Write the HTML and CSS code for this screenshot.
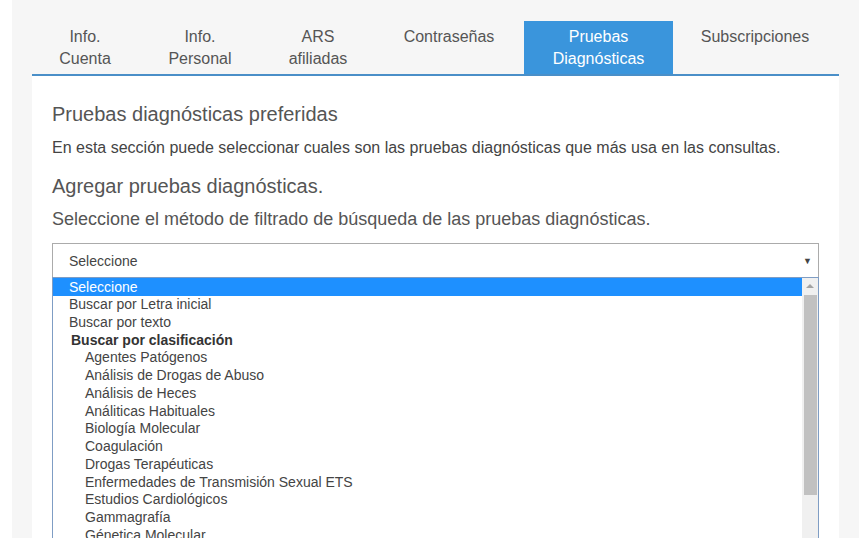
FILE: index.html
```html
<!DOCTYPE html>
<html lang="es">
<head>
<meta charset="utf-8">
<title>Pruebas diagnósticas</title>
<link rel="stylesheet" href="styles.css">
</head>
<body>
<div class="page">
  <nav class="tabs">
    <div class="tab tab-1">Info.<br>Cuenta</div>
    <div class="tab tab-2">Info.<br>Personal</div>
    <div class="tab tab-3">ARS<br>afiliadas</div>
    <div class="tab tab-4">Contraseñas</div>
    <div class="tab tab-5 active">Pruebas<br>Diagnósticas</div>
    <div class="tab tab-6">Subscripciones</div>
  </nav>
  <section class="panel">
    <h2 class="title">Pruebas diagnósticas preferidas</h2>
    <p class="desc">En esta sección puede seleccionar cuales son las pruebas diagnósticas que más usa en las consultas.</p>
    <h3 class="subtitle">Agregar pruebas diagnósticas.</h3>
    <p class="label">Seleccione el método de filtrado de búsqueda de las pruebas diagnósticas.</p>
    <div class="select">
      <span class="select-value">Seleccione</span>
      <span class="select-arrow">▼</span>
    </div>
    <div class="listbox">
      <div class="options">
        <div class="opt selected">Seleccione</div>
        <div class="opt">Buscar por Letra inicial</div>
        <div class="opt">Buscar por texto</div>
        <div class="opt group">Buscar por clasificación</div>
        <div class="opt child">Agentes Patógenos</div>
        <div class="opt child">Análisis de Drogas de Abuso</div>
        <div class="opt child">Análisis de Heces</div>
        <div class="opt child">Análiticas Habituales</div>
        <div class="opt child">Biología Molecular</div>
        <div class="opt child">Coagulación</div>
        <div class="opt child">Drogas Terapéuticas</div>
        <div class="opt child">Enfermedades de Transmisión Sexual ETS</div>
        <div class="opt child">Estudios Cardiológicos</div>
        <div class="opt child">Gammagrafía</div>
        <div class="opt child">Génetica Molecular</div>
      </div>
      <div class="scrollbar">
        <div class="scroll-up"></div>
        <div class="scroll-thumb"></div>
      </div>
    </div>
  </section>
</div>
</body>
</html>
```
FILE: styles.css
```css
html, body {
  margin: 0;
  padding: 0;
  background: #ffffff;
  overflow: hidden;
}
body {
  font-family: "Liberation Sans", Arial, sans-serif;
  color: #555;
}
.page {
  margin-left: 12px;
  width: 847px;
  height: 538px;
  box-sizing: border-box;
  background: #f6f6f6;
  padding: 21px 20px 0 20px;
  overflow: hidden;
}
.tabs {
  display: flex;
  height: 53px;
  border-bottom: 2px solid #4a8fc8;
}
.tab {
  box-sizing: border-box;
  text-align: center;
  font-size: 16px;
  line-height: 22px;
  padding-top: 5px;
  color: #555;
}
.tab-1 { width: 106px; }
.tab-2 { width: 124px; }
.tab-3 { width: 112px; }
.tab-4 { width: 150px; }
.tab-5 { width: 149px; }
.tab-6 { width: 164px; }
.tab.active {
  background: #3a95dc;
  color: #fff;
}
.panel {
  background: #fff;
  padding: 27px 20px 0 20px;
  height: 470px;
}
.title {
  margin: 0;
  font-size: 20px;
  line-height: 22px;
  font-weight: normal;
  color: #555;
}
.desc {
  margin: 12px 0 0 0;
  font-size: 16px;
  line-height: 22px;
  color: #444;
}
.subtitle {
  margin: 16px 0 0 0;
  font-size: 20px;
  line-height: 22px;
  font-weight: normal;
  color: #555;
}
.label {
  margin: 11px 0 0 0;
  font-size: 18px;
  line-height: 22px;
  color: #555;
}
.select {
  margin-top: 13px;
  height: 34px;
  box-sizing: border-box;
  border: 1px solid #ababab;
  border-bottom: none;
  display: flex;
  align-items: center;
  justify-content: space-between;
  padding: 0 6px 0 16px;
  font-size: 14px;
  color: #444;
}
.select-arrow {
  font-size: 9px;
  color: #444;
}
.listbox {
  display: flex;
  border: 1px solid #7f9dc4;
  border-bottom: none;
  height: 300px;
}
.options {
  flex: 1;
}
.opt {
  height: 17.75px;
  line-height: 17.75px;
  font-size: 14px;
  color: #444;
  padding-left: 16px;
  white-space: nowrap;
}
.opt.selected {
  background: #1e90ff;
  color: #fff;
  height: 18px;
  line-height: 18px;
}
.opt.group {
  font-weight: bold;
  color: #333;
  padding-left: 18px;
}
.opt.child {
  padding-left: 32px;
}
.scrollbar {
  width: 16px;
  background: #f0f0f0;
  display: flex;
  flex-direction: column;
  align-items: center;
}
.scroll-up {
  height: 17px;
  width: 16px;
  position: relative;
}
.scroll-up::after {
  content: "";
  position: absolute;
  left: 4px;
  top: 6px;
  border-left: 4px solid transparent;
  border-right: 4px solid transparent;
  border-bottom: 4px solid #a3a3a3;
}
.scroll-thumb {
  width: 13px;
  height: 200px;
  background: #c1c1c1;
}
```
